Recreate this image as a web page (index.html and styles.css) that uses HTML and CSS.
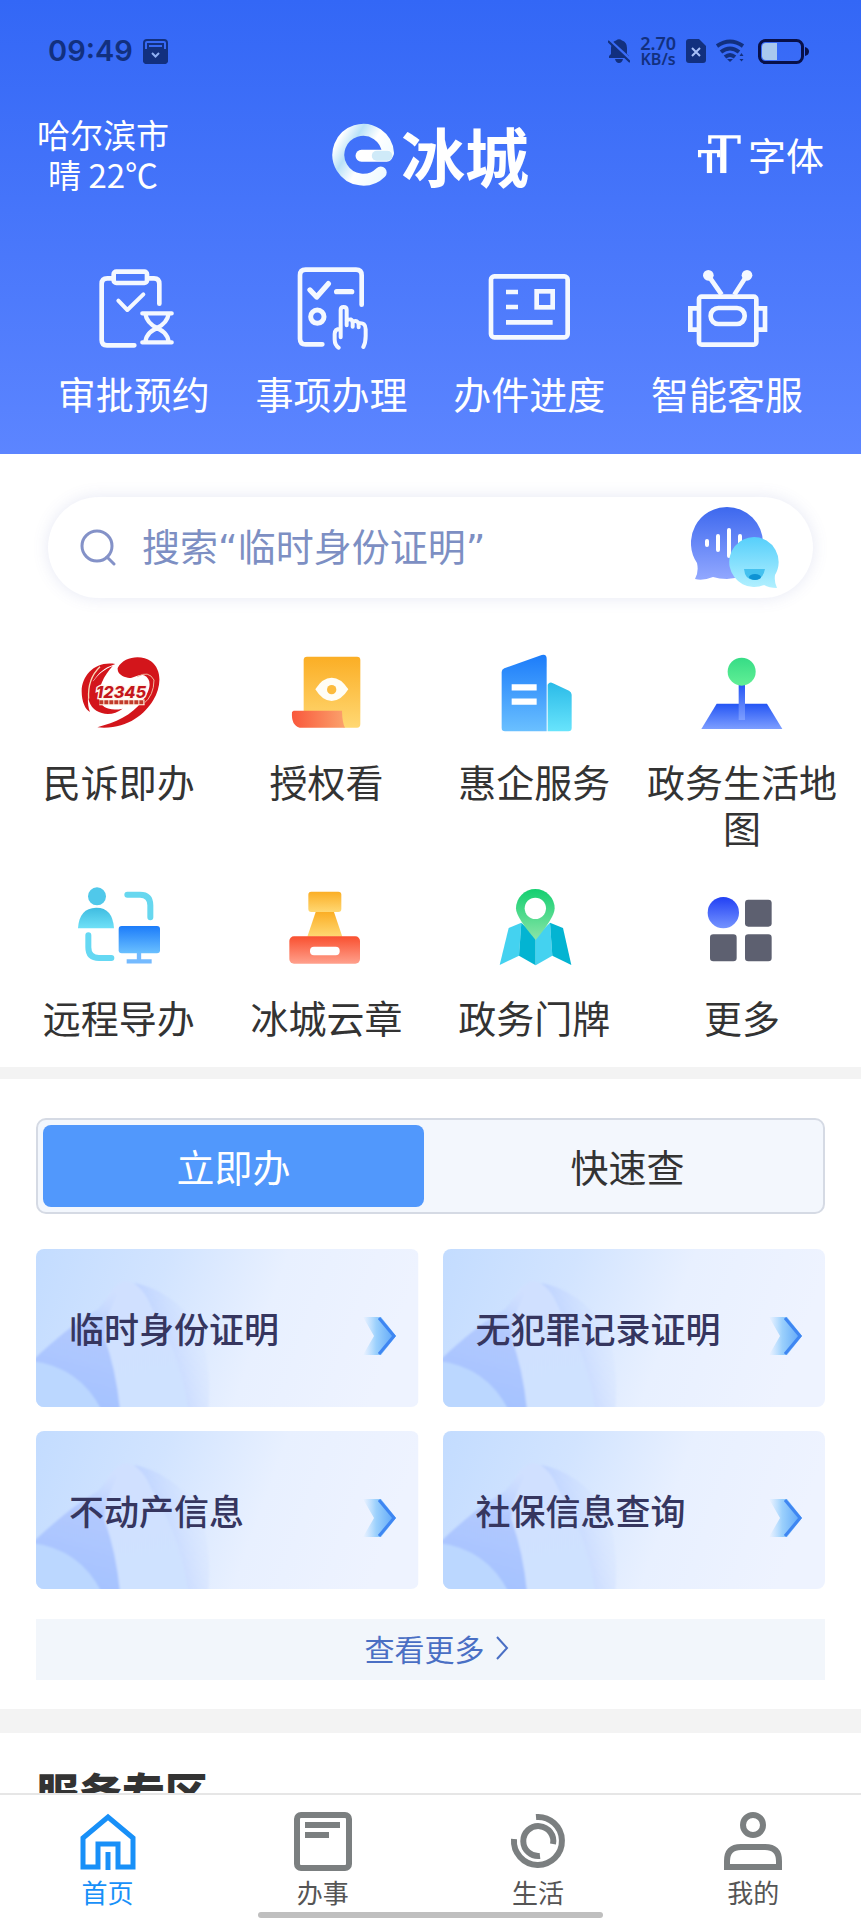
FILE: index.html
```html
<!DOCTYPE html>
<html lang="zh-CN">
	<head>
		<meta charset="utf-8">
		<meta name="viewport" content="width=device-width, initial-scale=1">
		<title>e冰城</title>
		<link rel="stylesheet" href="styles.css">
	</head>
	<body>

		<!-- shared drawings for the cards -->
		<svg class="defs" width="0" height="0" aria-hidden="true">
			<defs>
				<linearGradient id="cardBase" x1="0" y1="0" x2="1" y2="0.15">
					<stop offset="0" stop-color="#c3dcff"/>
					<stop offset="0.35" stop-color="#d2e4ff"/>
					<stop offset="0.65" stop-color="#e8f0ff"/>
					<stop offset="1" stop-color="#eef3ff"/>
				</linearGradient>
				<linearGradient id="petalDark" gradientUnits="userSpaceOnUse" x1="75" y1="40" x2="45" y2="150">
					<stop offset="0" stop-color="#c6d8ff" stop-opacity="0"/>
					<stop offset="0.4" stop-color="#b2c9fe"/>
					<stop offset="1" stop-color="#a6c3ff"/>
				</linearGradient>
				<linearGradient id="petalLight" gradientUnits="userSpaceOnUse" x1="90" y1="30" x2="110" y2="158">
					<stop offset="0" stop-color="#d0e0ff"/>
					<stop offset="1" stop-color="#cfe2ff"/>
				</linearGradient>
				<linearGradient id="petalShade" gradientUnits="userSpaceOnUse" x1="105" y1="70" x2="170" y2="50">
					<stop offset="0" stop-color="#b7ccfe"/>
					<stop offset="1" stop-color="#d6e6ff" stop-opacity="0"/>
				</linearGradient>
				<filter id="soft"><feGaussianBlur stdDeviation="1"/></filter>
				<linearGradient id="arrowFill" x1="0" y1="0" x2="1" y2="0">
					<stop offset="0" stop-color="#a8d8ff" stop-opacity="0"/>
					<stop offset="0.4" stop-color="#9bd0fc"/>
					<stop offset="1" stop-color="#5aa4f8"/>
				</linearGradient>
			</defs>
			<symbol id="cardArt" viewBox="0 0 382 158" preserveAspectRatio="none">
				<rect width="382" height="158" fill="url(#cardBase)"/>
				<g filter="url(#soft)">
					<path d="M98 34Q134 40 164 80Q176 120 172 162H152Q140 90 98 34Z" fill="url(#petalShade)" opacity="0.8"/>
					<path d="M90 32Q106 34 116 60Q146 108 152 162H84Q76 110 62 70Q74 34 90 32Z" fill="url(#petalLight)"/>
					<path d="M-4 112Q34 76 62 60Q74 44 88 34Q70 62 68 88Q80 120 84 162H64Q46 122 -4 113Z" fill="url(#petalDark)"/>
					<path d="M-4 112Q44 118 66 162H-4Z" fill="#bbd7ff"/>
				</g>
			</symbol>
			<symbol id="arrow" viewBox="0 0 36 38">
				<path d="M2 0H20L35 19 20 38H2L13 19Z" fill="url(#arrowFill)"/>
				<path d="M18 1L33 19 18 37" fill="none" stroke="#3f86f2" stroke-width="3"/>
			</symbol>
		</svg>

		<div class="page">
			<div class="content">

				<header class="header">
					<div class="status-bar">
						<span class="status-time">09:49</span>
						<svg width="25" height="25" viewBox="0 0 25 25">
							<rect x="1" y="1" width="23" height="23" rx="3" fill="none" stroke="#12307f" stroke-width="2"/>
							<path d="M5 11V5H20V11" fill="none" stroke="#12307f" stroke-width="2"/>
							<path d="M0 10H6V8H19V10H25V21Q25 25 21 25H4Q0 25 0 21Z" fill="#12307f"/>
							<path d="M9 14L12.500 17.500 16 14" fill="none" stroke="#8fb0f4" stroke-width="2"/>
						</svg>
						<span class="status-space"></span>
						<svg width="22" height="24" viewBox="0 0 22 24" fill="#12307f">
							<path d="M1 19V17L3 15V9Q3 3 8 1.500Q11 -1 14 1.500Q19 3 19 9V15L21 17V19ZM7 20H15Q14 24 11 24T7 20Z"/>
							<path d="M1 1L23 21" stroke="#3b6cf7" stroke-width="3"/>
							<path d="M0 2L22 23" stroke="#12307f" stroke-width="2"/>
						</svg>
						<span class="status-speed"><b>2.70</b><small>KB/s</small></span>
						<svg width="20" height="24" viewBox="0 0 20 24">
							<path d="M3 0H13L20 7V21Q20 24 17 24H3Q0 24 0 21V3Q0 0 3 0Z" fill="#12307f"/>
							<path d="M6 9L14 17M14 9L6 17" stroke="#a8c0f8" stroke-width="2"/>
						</svg>
						<svg width="28" height="24" viewBox="0 0 28 24" fill="none" stroke="#12307f" stroke-width="4">
							<path d="M1 7Q14 -2 27 7M5 13Q14 6 23 13M9 18Q14 14 19 18"/>
							<path d="M11 20H17L14 23ZM23.500 17L25.500 14 27.500 17ZM23.500 20L25.500 22.500 27.500 20Z" fill="#12307f" stroke="none"/>
						</svg>
						<svg class="status-battery" width="51" height="25" viewBox="0 0 51 25">
							<rect x="1.500" y="1.500" width="43" height="22" rx="6" fill="none" stroke="#08104a" stroke-width="3"/>
							<path d="M8 4H19V21H8Q4 21 4 17V8Q4 4 8 4Z" fill="#a9c8ee"/>
							<path d="M47 8Q51 9 51 12.500T47 17Z" fill="#08104a"/>
						</svg>
					</div>

					<div class="top-bar">
						<div class="weather">哈尔滨市<br>晴 22℃</div>
						<h1 class="logo">
							<svg width="63" height="63" viewBox="995 371 190 190" fill="none" stroke-linecap="round" role="img" aria-label="e">
								<defs>
									<linearGradient id="ring" x1="0" y1="0.2" x2="1" y2="0.8">
										<stop offset="0" stop-color="#ffffff"/>
										<stop offset="0.25" stop-color="#b9e2f8"/>
										<stop offset="0.55" stop-color="#ffffff"/>
										<stop offset="1" stop-color="#eefaff"/>
									</linearGradient>
								</defs>
								<path d="M1164 462A75 75 0 1 0 1142 520" stroke="url(#ring)" stroke-width="36"/>
								<path d="M1084 470H1160" stroke="#ffffff" stroke-width="36"/>
								<path d="M1130 470H1162" stroke="#cfeaf8" stroke-width="30"/>
							</svg>
							<span>冰城</span>
						</h1>
						<button class="font-button" type="button">
							<svg width="46" height="42" viewBox="800 400 140 126" fill="none" stroke="#ffffff">
								<path d="M842 432V411H931V432" stroke-width="10"/>
								<path d="M883 411V521" stroke-width="19"/>
								<path d="M811 473V456H869V473" stroke-width="10"/>
								<path d="M841 456V521" stroke-width="16"/>
							</svg>
							字体
						</button>
					</div>

					<nav class="quick">
						<a class="item" href="#">
							<svg class="icon" viewBox="276 108 252 252" fill="none" stroke="#f4f8ff" stroke-width="14" stroke-linecap="round" stroke-linejoin="round">
								<path d="M338 145H322Q305 145 305 162V330Q305 346 321 346H403M446 145H462Q478 145 478 162V221"/>
								<rect x="341" y="125" width="100" height="34" rx="8"/>
								<path d="M355 212L382 240 430 193" stroke-width="12"/>
								<path d="M427 250H515M427 337H515M436 252C440 276 455 286 471 294C487 286 502 276 506 252M436 335C440 311 455 302 471 294C487 302 502 311 506 335" stroke-width="13"/>
							</svg>
							<span>审批预约</span>
						</a>
						<a class="item" href="#">
							<svg class="icon" viewBox="870 108 252 252" fill="none" stroke="#f4f8ff" stroke-width="14" stroke-linecap="round" stroke-linejoin="round">
								<path d="M967 343H917Q900 343 900 326V136Q900 119 917 119H1068Q1085 119 1085 136V224"/>
								<path d="M930 180L950 201 985 161M1010 185H1055" stroke-width="16"/>
								<circle cx="952" cy="260" r="20" stroke-width="15"/>
								<path d="M1022 322V240Q1022 231 1031 231T1040 240V286M1040 272Q1056 262 1058 278V290M1058 276Q1074 268 1076 284V292M1076 280Q1097 276 1097 298V318Q1097 338 1090 351M1022 296Q1004 296 1004 312V328Q1004 346 1016 353" stroke-width="12"/>
							</svg>
							<span>事项办理</span>
						</a>
						<a class="item" href="#">
							<svg class="icon" viewBox="174 108 252 252" fill="none" stroke="#f4f8ff" stroke-width="14">
								<rect x="186" y="139" width="230" height="183" rx="10"/>
								<path d="M231 186H267M231 231H267M231 277H371"/>
								<rect x="323" y="184" width="48" height="48"/>
							</svg>
							<span>办件进度</span>
						</a>
						<a class="item" href="#">
							<svg class="icon" viewBox="770 108 252 252" fill="none" stroke="#f4f8ff" stroke-width="14">
								<rect x="812" y="200" width="172" height="144" rx="8"/>
								<rect x="847" y="234" width="102" height="48" rx="23"/>
								<path d="M812 235H786V299H812M984 235H1010V299H984M880 194L846 145M918 194L950 145"/>
								<circle cx="840" cy="136" r="16" fill="#f4f8ff" stroke="none"/>
								<circle cx="956" cy="136" r="16" fill="#f4f8ff" stroke="none"/>
							</svg>
							<span>智能客服</span>
						</a>
					</nav>
				</header>

				<form class="search">
					<svg width="36" height="38" viewBox="0 0 36 38" fill="none" stroke="#8492c8" stroke-width="3" stroke-linecap="round">
						<circle cx="17" cy="17" r="15"/>
						<path d="M27 28L34 35"/>
					</svg>
					<input class="search-input" type="search" aria-label="搜索" placeholder="搜索“临时身份证明”">
					<button class="voice-button" type="button" aria-label="语音">
						<svg width="90" height="84" viewBox="0 0 90 84">
							<defs>
								<linearGradient id="bubbleBlue" x1="0" y1="0" x2="0" y2="1">
									<stop offset="0" stop-color="#3d68ee"/>
									<stop offset="1" stop-color="#92a8ff"/>
								</linearGradient>
								<linearGradient id="bubbleCyan" x1="0" y1="0" x2="0" y2="1">
									<stop offset="0" stop-color="#56cffb"/>
									<stop offset="1" stop-color="#b2f0ff"/>
								</linearGradient>
							</defs>
							<path d="M36 1A36 36 0 1 1 36 73Q28 73 22 71Q12 75 4 73Q8 66 6 57A36 36 0 0 1 36 1Z" fill="url(#bubbleBlue)"/>
							<path d="M16 35V39M27 30V44M38 24V50M49 30V44" stroke="#ffffff" stroke-width="4" stroke-linecap="round"/>
							<path d="M63 31A25 25 0 0 1 84 69Q83 76 86 82Q78 82 73 79A25 25 0 1 1 63 31Z" fill="url(#bubbleCyan)"/>
							<path d="M53 63H74Q72 74 63 74T53 63Z" fill="#44c1ef"/>
							<ellipse cx="64" cy="71" rx="6" ry="3" fill="#0f93d4"/>
						</svg>
					</button>
				</form>

				<nav class="services">
					<a class="item" href="#">
						<svg class="icon" viewBox="231 54 252 252">
							<g fill="#d3151b">
								<path d="M353 114C372 78 425 74 453 94C487 120 484 170 460 210C432 256 378 300 292 292C345 278 396 256 426 214C452 182 458 148 432 136C410 130 400 150 378 142C362 136 352 128 353 114Z"/>
								<path d="M346 102C288 92 245 134 245 184C245 214 256 240 270 246C252 194 276 138 322 112Z"/>
								<path d="M338 108C290 126 256 176 268 216C280 250 330 266 368 236C330 244 304 234 298 208C292 176 312 136 338 108Z"/>
								<path d="M264 168C272 156 284 150 292 150L280 196H262Z"/>
							</g>
							<path d="M300 110Q262 146 266 206" fill="none" stroke="#f7d9b8" stroke-width="4"/>
							<path d="M412 140Q446 120 462 150Q462 196 430 222" fill="none" stroke="#f0b9a0" stroke-width="3"/>
							<text class="hotline" x="288" y="203">12345</text>
							<path d="M298 217H434" stroke="#fff4e4" stroke-width="17"/>
							<path d="M298 217H434" stroke="#c23a2a" stroke-width="12" stroke-dasharray="12 3"/>
						</svg>
						<span>民诉即办</span>
					</a>
					<a class="item" href="#">
						<svg class="icon" viewBox="854 54 252 252">
							<defs>
								<linearGradient id="orange" x1="0" y1="0" x2="0" y2="1">
									<stop offset="0" stop-color="#fbae25"/>
									<stop offset="1" stop-color="#ffd873"/>
								</linearGradient>
								<linearGradient id="redRoll" x1="0" y1="0" x2="1" y2="0">
									<stop offset="0" stop-color="#f9583c"/>
									<stop offset="1" stop-color="#fba26c"/>
								</linearGradient>
							</defs>
							<path d="M920 80H1070Q1080 80 1080 90V282Q1080 293 1070 293H1034L910 250V90Q910 80 920 80Z" fill="url(#orange)"/>
							<path d="M880 242H1025Q1026 280 1034 293H898Q872 286 875 246Z" fill="url(#redRoll)"/>
							<path d="M945 178Q966 143 994 143T1044 178Q1022 213 994 213T945 178Z" fill="#fffdf5"/>
							<circle cx="994" cy="179" r="14" fill="#fcbb3d"/>
						</svg>
						<span>授权看</span>
					</a>
					<a class="item" href="#">
						<svg class="icon" viewBox="187 54 252 252">
							<defs>
								<linearGradient id="tower" x1="0" y1="0" x2="0" y2="1">
									<stop offset="0" stop-color="#1c7cfa"/>
									<stop offset="1" stop-color="#6ac0ff"/>
								</linearGradient>
								<linearGradient id="cyanTower" x1="0" y1="0" x2="0" y2="1">
									<stop offset="0" stop-color="#2bbbe8"/>
									<stop offset="1" stop-color="#68e4fc"/>
								</linearGradient>
							</defs>
							<path d="M354 164Q360 154 370 160L418 182Q426 186 426 194V294Q426 304 416 304H354Z" fill="url(#cyanTower)"/>
							<path d="M224 115L336 75Q351 71 351 86V304H226Q216 304 216 294V126Q216 118 224 115Z" fill="url(#tower)"/>
							<path d="M246 172H321M246 215H321" stroke="#ffffff" stroke-width="19"/>
						</svg>
						<span>惠企服务</span>
					</a>
					<a class="item" href="#">
						<svg class="icon" viewBox="813 54 252 252">
							<defs>
								<linearGradient id="board" x1="0" y1="0" x2="0" y2="1">
									<stop offset="0" stop-color="#2455f4"/>
									<stop offset="1" stop-color="#7d9eff"/>
								</linearGradient>
								<linearGradient id="greenBall" x1="0" y1="0" x2="0" y2="1">
									<stop offset="0" stop-color="#36dc86"/>
									<stop offset="1" stop-color="#62ef95"/>
								</linearGradient>
							</defs>
							<path d="M863 221H1014L1060 297H817Z" fill="url(#board)"/>
							<rect x="929" y="160" width="19" height="110" fill="url(#board)"/>
							<circle cx="938" cy="125" r="42" fill="url(#greenBall)"/>
						</svg>
						<span>政务生活地图</span>
					</a>
					<a class="item" href="#">
						<svg class="icon" viewBox="231 72 252 252">
							<defs>
								<linearGradient id="teal" gradientUnits="userSpaceOnUse" x1="0" y1="130" x2="0" y2="210">
									<stop offset="0" stop-color="#35b4dc"/>
									<stop offset="1" stop-color="#73e4f9"/>
								</linearGradient>
							</defs>
							<circle cx="291" cy="109" r="27" fill="#50c8ea"/>
							<path d="M234 205Q238 144 288 143T342 205Z" fill="url(#teal)"/>
							<path d="M382 104H420Q451 104 451 136V172" fill="none" stroke="#67d7ef" stroke-width="18" stroke-linecap="round"/>
							<path d="M265 226V262Q265 294 297 294H334" fill="none" stroke="#65d8f3" stroke-width="18" stroke-linecap="round"/>
							<path d="M417 275V304M380 304H455" stroke="#74baff" stroke-width="13"/>
							<rect x="356" y="198" width="124" height="82" rx="9" fill="url(#tower)"/>
						</svg>
						<span>远程导办</span>
					</a>
					<a class="item" href="#">
						<svg class="icon" viewBox="854 72 252 252">
							<defs>
								<linearGradient id="stampBase" x1="0" y1="0" x2="0" y2="1">
									<stop offset="0" stop-color="#f95030"/>
									<stop offset="1" stop-color="#ffa08c"/>
								</linearGradient>
							</defs>
							<rect x="924" y="95" width="99" height="61" rx="9" fill="url(#orange)"/>
							<path d="M946 156H1001L1026 230H921Z" fill="url(#orange)"/>
							<rect x="867" y="229" width="212" height="82" rx="14" fill="url(#stampBase)"/>
							<rect x="929" y="260" width="89" height="26" rx="12" fill="#ffffff"/>
						</svg>
						<span>冰城云章</span>
					</a>
					<a class="item" href="#">
						<svg class="icon" viewBox="187 72 252 252">
							<defs>
								<linearGradient id="pin" x1="0" y1="0" x2="0" y2="1">
									<stop offset="0" stop-color="#13cf70"/>
									<stop offset="1" stop-color="#8be5a8"/>
								</linearGradient>
							</defs>
							<path d="M237 204L275 188 268 287 210 315Z" fill="#44d2f0"/>
							<path d="M275 188L318 230V316L268 287Z" fill="#03b4d2"/>
							<path d="M318 230L361 188 368 287 318 316Z" fill="#44d2f0"/>
							<path d="M361 188L400 204 425 315 368 287Z" fill="#03b4d2"/>
							<path d="M317 87A58 58 0 0 1 375 145Q375 172 318 240Q259 172 259 145A58 58 0 0 1 317 87Z" fill="url(#pin)"/>
							<circle cx="317" cy="145" r="32" fill="#ffffff"/>
						</svg>
						<span>政务门牌</span>
					</a>
					<a class="item" href="#">
						<svg class="icon" viewBox="810 72 252 252" fill="#5d6070">
							<defs>
								<linearGradient id="moreBall" x1="0" y1="0" x2="0" y2="1">
									<stop offset="0" stop-color="#2140f4"/>
									<stop offset="1" stop-color="#7594ff"/>
								</linearGradient>
							</defs>
							<circle cx="880" cy="158" r="47" fill="url(#moreBall)"/>
							<rect x="945" y="119" width="80" height="81" rx="10"/>
							<rect x="840" y="223" width="80" height="81" rx="10"/>
							<rect x="945" y="223" width="80" height="81" rx="10"/>
						</svg>
						<span>更多</span>
					</a>
				</nav>

				<section class="handle">
					<div class="tabs" role="tablist">
						<button class="tab active" type="button" role="tab" aria-selected="true">立即办</button>
						<button class="tab" type="button" role="tab" aria-selected="false">快速查</button>
					</div>
					<div class="cards">
						<a class="card" href="#">
							<svg class="card-art"><use href="#cardArt"/></svg>
							<span>临时身份证明</span>
							<svg class="card-arrow"><use href="#arrow"/></svg>
						</a>
						<a class="card" href="#">
							<svg class="card-art"><use href="#cardArt"/></svg>
							<span>无犯罪记录证明</span>
							<svg class="card-arrow"><use href="#arrow"/></svg>
						</a>
						<a class="card" href="#">
							<svg class="card-art"><use href="#cardArt"/></svg>
							<span>不动产信息</span>
							<svg class="card-arrow"><use href="#arrow"/></svg>
						</a>
						<a class="card" href="#">
							<svg class="card-art"><use href="#cardArt"/></svg>
							<span>社保信息查询</span>
							<svg class="card-arrow"><use href="#arrow"/></svg>
						</a>
					</div>
					<a class="view-more" href="#">
						查看更多
						<svg width="14" height="24" viewBox="0 0 14 24" fill="none" stroke="#4a6fc4" stroke-width="2"><path d="M2 1L12 12 2 23"/></svg>
					</a>
				</section>

				<section class="zone">
					<h2 class="zone-title">服务专区</h2>
				</section>
			</div>

			<footer class="footer">
				<nav class="footer-nav">
					<a class="footer-item active" href="#">
						<svg width="60" height="60" viewBox="0 0 60 60" fill="none" stroke="currentColor" stroke-width="5">
							<path d="M5 56V27L30 6 55 27V56H40V33H20V56Z"/>
							<path d="M30 41V59"/>
						</svg>
						<span>首页</span>
					</a>
					<a class="footer-item" href="#">
						<svg width="60" height="60" viewBox="0 0 60 60" fill="none" stroke="#7b7f80" stroke-width="6">
							<rect x="4" y="4" width="52" height="53" rx="4"/>
							<path d="M12 14H47M12 24H36"/>
						</svg>
						<span>办事</span>
					</a>
					<a class="footer-item" href="#">
						<svg width="60" height="60" viewBox="0 0 60 60" fill="none" stroke="#7b7f80" stroke-width="6">
							<path d="M28 6A24 24 0 1 1 6 28"/>
							<path d="M45 33A15 15 0 1 0 32 45"/>
						</svg>
						<span>生活</span>
					</a>
					<a class="footer-item" href="#">
						<svg width="60" height="60" viewBox="0 0 60 60" fill="none" stroke="#7b7f80" stroke-width="6">
							<circle cx="30" cy="14" r="10"/>
							<path d="M4 56V50Q4 36 18 36H42Q56 36 56 50V56Z"/>
						</svg>
						<span>我的</span>
					</a>
				</nav>
				<div class="home-line"></div>
			</footer>
		</div>

	</body>
</html>
```
FILE: styles.css
```css
* {
	box-sizing: border-box;
}

body {
	margin: 0;
	color: #333333;
	font-family: "Noto Sans CJK SC", sans-serif;
	font-size: 38px;
	line-height: 46px;
	background: #ffffff;
}

a {
	color: inherit;
	text-decoration: none;
}

button {
	border: 0;
	padding: 0;
	color: inherit;
	font: inherit;
	background: none;
	cursor: pointer;
}

svg {
	display: block;
	flex: none;
}

.defs {
	position: absolute;
}

/* scrolling content above, navigation always at the bottom */
.page {
	display: flex;
	flex-direction: column;
	height: 100vh;
}

.content {
	flex: 1;
	min-height: 0;
	overflow-y: auto;
	scrollbar-width: none;
}

.header {
	padding-bottom: 38px;
	color: #ffffff;
	background: linear-gradient(#3367f6, #5c85ff);
}

.status-bar {
	display: flex;
	align-items: center;
	gap: 10px;
	height: 102px;
	padding: 0 52px 0 48px;
	color: #12307f;
}

.status-time {
	font: 600 29px/36px Inter, sans-serif;
}

.status-space {
	flex: 1;
}

.status-speed {
	display: flex;
	flex-direction: column;
	font-family: "Noto Sans", sans-serif;
	font-weight: 600;
	line-height: 16px;
	text-align: center;
}

.status-speed b {
	font-size: 18px;
	font-weight: 600;
}

.status-speed small {
	font-size: 16px;
}

.status-battery {
	margin-left: 4px;
}

.top-bar {
	display: grid;
	grid-template-columns: 1fr auto 1fr;
	align-items: center;
	padding: 12px 37px 72px;
}

.weather {
	justify-self: start;
	font-size: 33px;
	line-height: 40px;
	text-align: center;
}

.logo {
	display: flex;
	align-items: center;
	gap: 6px;
	margin: 0;
	font-size: 64px;
	font-weight: 700;
	line-height: 80px;
}

.font-button {
	display: flex;
	align-items: center;
	justify-self: end;
	gap: 6px;
}

.quick {
	display: grid;
	grid-template-columns: repeat(4, 1fr);
	padding: 0 35px;
}

.item {
	display: flex;
	flex-direction: column;
	align-items: center;
	gap: 26px;
	text-align: center;
}

.quick .item {
	gap: 20px;
}

.icon {
	width: 84px;
	height: 84px;
}

.search {
	display: flex;
	align-items: center;
	gap: 26px;
	height: 101px;
	margin: 43px 48px 50px;
	padding: 0 32px;
	border-radius: 51px;
	box-shadow: 0 0 16px rgba(90, 100, 180, 0.15);
}

/* DejaVu only supplies the narrow quotation marks */
.search-input {
	flex: 1;
	min-width: 0;
	border: 0;
	padding: 0;
	outline: 0;
	color: #333333;
	font: 38px/46px "DejaVu Sans", "Noto Sans CJK SC", sans-serif;
	background: none;
}

.search-input::placeholder {
	color: #7d8fc3;
	opacity: 1;
}

.services {
	display: grid;
	grid-template-columns: repeat(4, 1fr);
	row-gap: 34px;
	padding: 0 15px 27px;
}

.hotline {
	fill: #c4161c;
	stroke: #fff6ea;
	stroke-width: 8px;
	paint-order: stroke;
	font: italic 800 49px Inter, sans-serif;
}

.handle {
	padding: 39px 36px 29px;
	border-top: 12px solid #f3f3f3;
}

.tabs {
	display: flex;
	height: 96px;
	border: 2px solid #d5dae4;
	border-radius: 10px;
	background: #f3f7fd;
}

.tab {
	flex: 1;
	margin: 5px;
	border-radius: 8px;
}

.tab.active {
	margin-right: 8px;
	color: #ffffff;
	background: #5198fc;
}

.cards {
	display: grid;
	grid-template-columns: 1fr 1fr;
	gap: 24px;
	margin: 35px 0 30px;
}

.card {
	position: relative;
	display: flex;
	align-items: center;
	justify-content: space-between;
	height: 158px;
	padding: 0 22px 0 33px;
	border-radius: 8px;
	overflow: hidden;
	color: #36365f;
	font-size: 35px;
	font-weight: 500;
}

.card span {
	position: relative;
}

.card-art {
	position: absolute;
	inset: 0;
	width: 100%;
	height: 100%;
}

.card-arrow {
	position: relative;
	width: 36px;
	height: 38px;
	margin-top: 16px;
}

.view-more {
	display: flex;
	align-items: center;
	justify-content: center;
	gap: 10px;
	height: 61px;
	padding: 0 0 3px 12px;
	color: #4a6fc4;
	font-size: 30px;
	background: #f2f6fb;
}

.zone {
	padding: 30px 36px;
	border-top: 24px solid #f3f3f3;
}

.zone-title {
	margin: 0;
	font-size: 43px;
	font-weight: 900;
	line-height: 56px;
}

.footer {
	padding: 16px 0 2px;
	border-top: 2px solid #e6e6e6;
	background: #ffffff;
}

.footer-nav {
	display: grid;
	grid-template-columns: repeat(4, 1fr);
}

.footer-item {
	display: flex;
	flex-direction: column;
	align-items: center;
	gap: 6px;
	color: #555555;
	font-size: 26px;
	line-height: 30px;
}

.footer-item.active {
	color: #1890f8;
}

.home-line {
	width: 40%;
	height: 6px;
	margin: 5px auto 0;
	border-radius: 3px;
	background: #bfbfbf;
}
```
